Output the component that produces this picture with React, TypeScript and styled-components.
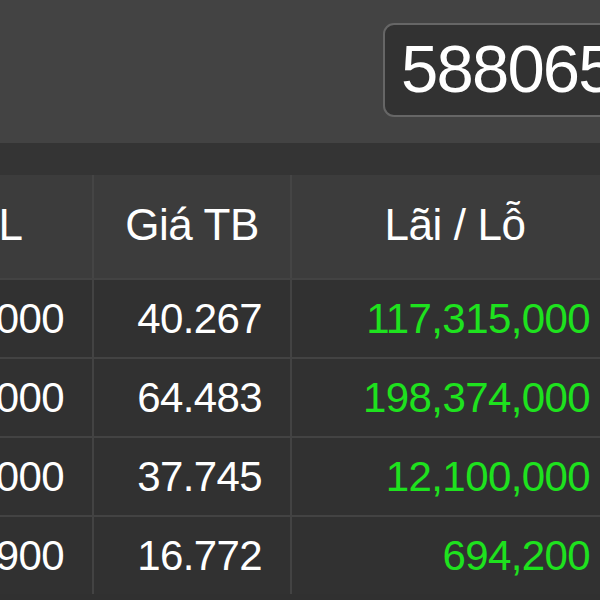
import React from 'react'
import styled, { createGlobalStyle } from 'styled-components'

const GlobalStyle = createGlobalStyle`
  html, body {
    margin: 0;
    padding: 0;
    background: #303030;
  }
  body {
    font-family: 'Liberation Sans', Arial, sans-serif;
  }
`

const HOLDINGS = [
  { qty: '10,000', avgPrice: '40.267', pnl: '117,315,000' },
  { qty: '20,000', avgPrice: '64.483', pnl: '198,374,000' },
  { qty: '10,000', avgPrice: '37.745', pnl: '12,100,000' },
  { qty: '2,900', avgPrice: '16.772', pnl: '694,200' },
]

const Page = styled.div`
  width: 600px;
  height: 600px;
  overflow: hidden;
  background: #303030;
  display: flex;
  flex-direction: column;
`

const TopBar = styled.div`
  height: 143px;
  flex-shrink: 0;
  background: #434343;
  display: flex;
  align-items: flex-start;
  padding: 23px 0 0 383px;
  box-sizing: border-box;
`

const AccountBox = styled.div`
  flex-shrink: 0;
  width: 280px;
  height: 94px;
  box-sizing: border-box;
  border: 2px solid #666;
  border-radius: 11px;
  background: #323232;
  color: #fff;
  font-size: 67px;
  letter-spacing: -1.8px;
  line-height: 88px;
  padding-left: 16px;
  white-space: nowrap;
`

const Band = styled.div`
  height: 32px;
  flex-shrink: 0;
  background: #343434;
`

const Table = styled.div`
  margin-left: -100px;
  display: grid;
  grid-template-columns: 194px 198px 328px;
  width: 720px;
`

const HeaderCell = styled.div`
  height: 103px;
  background: #3c3c3c;
  color: #fff;
  font-size: 44px;
  letter-spacing: -0.4px;
  display: flex;
  align-items: center;
  justify-content: center;
  box-sizing: border-box;
  border-right: 2px solid #454545;
  padding-bottom: 4px;
`

const Cell = styled.div<{ $profit?: boolean }>`
  height: 79px;
  box-sizing: border-box;
  border-top: 2px solid #434343;
  border-right: 2px solid #434343;
  background: #313131;
  color: ${({ $profit }) => ($profit ? '#1ee21e' : '#fff')};
  font-size: 42px;
  letter-spacing: -0.6px;
  display: flex;
  align-items: center;
  justify-content: flex-end;
  padding-right: 28px;
  white-space: nowrap;
`

export default function App() {
  return (
    <>
      <GlobalStyle />
      <Page>
        <TopBar>
          <AccountBox>5880655</AccountBox>
        </TopBar>
        <Band />
        <Table>
          <HeaderCell>KL</HeaderCell>
          <HeaderCell>Giá TB</HeaderCell>
          <HeaderCell>Lãi / Lỗ</HeaderCell>
          {HOLDINGS.map(({ qty, avgPrice, pnl }, index) => (
            <React.Fragment key={index}>
              <Cell>{qty}</Cell>
              <Cell>{avgPrice}</Cell>
              <Cell $profit>{pnl}</Cell>
            </React.Fragment>
          ))}
        </Table>
      </Page>
    </>
  )
}
